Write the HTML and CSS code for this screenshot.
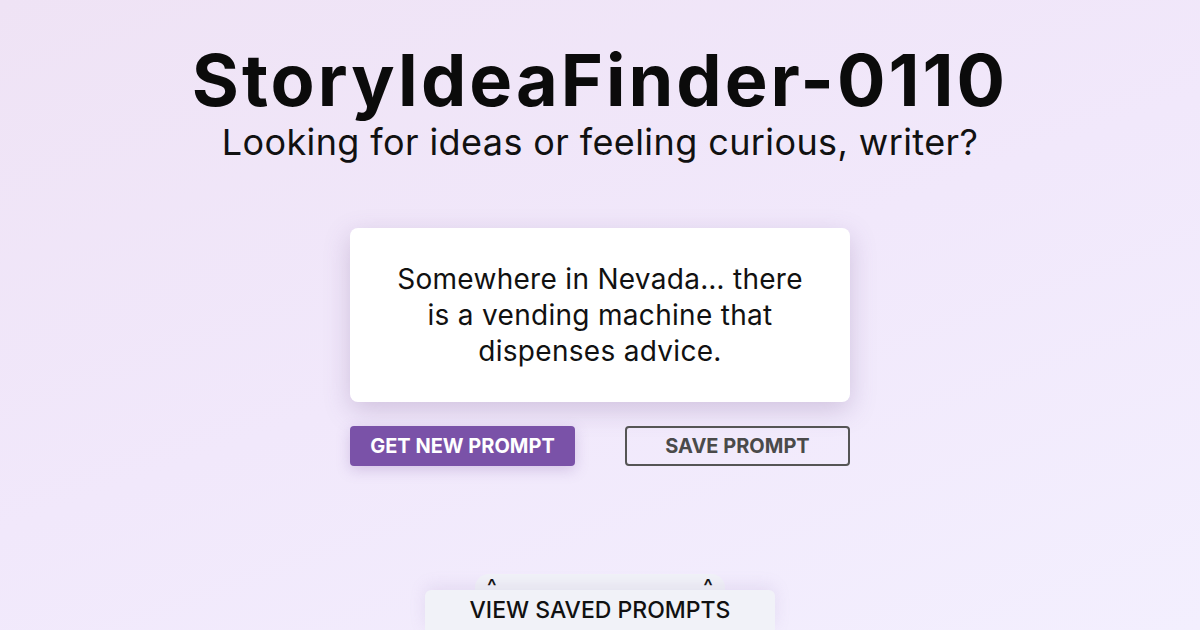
FILE: index.html
```html
<!DOCTYPE html>
<html lang="en">
<head>
<meta charset="utf-8">
<title>StoryIdeaFinder-0110</title>
<link rel="stylesheet" href="styles.css">
</head>
<body>
<main class="page">
  <header class="hero">
    <h1 class="title">StoryIdeaFinder-0110</h1>
    <p class="subtitle">Looking for ideas or feeling curious, writer?</p>
  </header>
  <section class="card">
    <p class="prompt">Somewhere in Nevada… there is a vending machine that dispenses advice.</p>
  </section>
  <div class="actions">
    <button class="btn btn-primary">GET NEW PROMPT</button>
    <button class="btn btn-outline">SAVE PROMPT</button>
  </div>
  <footer class="drawer">
    <div class="drawer-tab"><span>^</span><span>^</span></div>
    <div class="drawer-bar">VIEW SAVED PROMPTS</div>
  </footer>
</main>
</body>
</html>
```

FILE: styles.css
```css
* { box-sizing: border-box; }
html, body { margin: 0; padding: 0; }
body {
  width: 1200px;
  height: 630px;
  overflow: hidden;
  background: linear-gradient(160deg, #efe3f5 0%, #f1e8fb 50%, #f3effe 100%);
  font-family: "Inter", "DejaVu Sans", sans-serif;
  color: #111;
}
.page {
  height: 630px;
  display: flex;
  flex-direction: column;
  align-items: center;
}
.hero { text-align: center; padding-top: 40px; }
.title {
  margin: 0;
  font-family: "Inter", sans-serif;
  font-weight: 700;
  font-size: 72px;
  line-height: 80px;
  letter-spacing: 3px;
  color: #0b0b0b;
}
.subtitle {
  margin: 0;
  font-family: "Inter", sans-serif;
  font-weight: 400;
  font-size: 36px;
  line-height: 44px;
  letter-spacing: 0.4px;
  color: #111;
}
.card {
  margin-top: 64px;
  width: 500px;
  height: 174px;
  background: #fff;
  border-radius: 8px;
  box-shadow: 0 8px 26px rgba(110, 80, 140, 0.25);
  display: flex;
  align-items: center;
  justify-content: center;
  padding: 0 44px;
}
.prompt {
  margin: 0;
  text-align: center;
  font-family: "Inter", sans-serif;
  font-size: 28px;
  line-height: 36px;
  letter-spacing: 0.3px;
  color: #111;
}
.actions {
  margin-top: 24px;
  width: 500px;
  display: flex;
  justify-content: space-between;
}
.btn {
  width: 225px;
  height: 40px;
  border-radius: 4px;
  font-family: "Inter", sans-serif;
  font-weight: 700;
  font-size: 20px;
  cursor: pointer;
}
.btn-primary {
  background: #7a52a8;
  color: #fff;
  border: none;
  box-shadow: 0 4px 14px rgba(122, 82, 168, 0.25);
}
.btn-outline {
  background: transparent;
  color: #4a4a4a;
  border: 2px solid #555;
}
.drawer {
  margin-top: auto;
  display: flex;
  flex-direction: column;
  align-items: center;
}
.drawer-tab {
  width: 250px;
  height: 16px;
  background: #f1f2f8;
  border-radius: 14px 14px 0 0;
  display: flex;
  justify-content: space-between;
  padding: 0 12px;
  font-family: "Inter", sans-serif;
  font-weight: 600;
  font-size: 20px;
  line-height: 24px;
  color: #111;
}
.drawer-bar {
  width: 350px;
  height: 40px;
  background: #f1f2f8;
  border-radius: 6px 6px 0 0;
  text-align: center;
  font-family: "Inter", sans-serif;
  font-weight: 500;
  font-size: 23px;
  line-height: 40px;
  color: #111;
  box-shadow: 0 -4px 16px rgba(150, 120, 180, 0.15);
}
```
